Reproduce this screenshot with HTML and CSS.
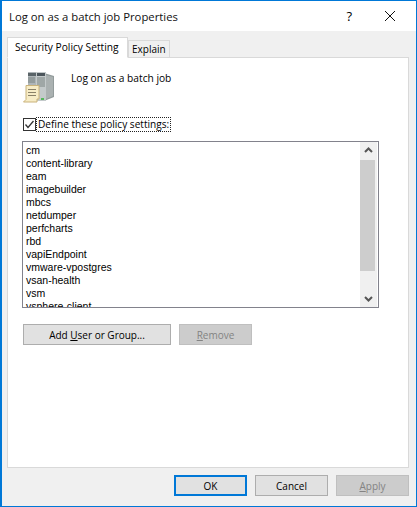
FILE: index.html
```html
<!DOCTYPE html>
<html lang="en">
<head>
<meta charset="utf-8">
<title>Log on as a batch job Properties</title>
<link rel="stylesheet" href="styles.css">
</head>
<body>
<div class="window">
  <header class="titlebar">
    <span class="title">Log on as a batch job Properties</span>
    <span class="help">?</span>
    <svg class="close" width="10" height="10" viewBox="0 0 10 10"><path d="M0 0L10 10M10 0L0 10" stroke="#111" stroke-width="1" fill="none"/></svg>
  </header>
  <main class="client">
    <div class="tabs">
      <div class="tab active">Security Policy Setting</div>
      <div class="tab">Explain</div>
    </div>
    <section class="panel">
      <div class="policy">
        <svg class="policy-icon" width="32" height="32" viewBox="0 0 32 32">
          <path d="M21 2L31 5V26L21 30Z" fill="#939c9c"/>
          <path d="M23 4L30 6V25L23 28Z" fill="#aab1b1"/>
          <rect x="5" y="1" width="10" height="20" fill="#aeb5b8"/>
          <rect x="13" y="1" width="10" height="29" fill="#c4cacb"/>
          <rect x="5" y="2" width="8" height="3" fill="#5a6468"/>
          <rect x="14" y="2" width="8" height="3" fill="#4c565c"/>
          <path d="M5 7H12M5 9H12M5 11H12M14 7H22M14 9H22M14 11H22M14 13H22M14 15H22" stroke="#7a8482" stroke-width="1"/>
          <rect x="18" y="27" width="3" height="2" fill="#55b85c"/>
          <path d="M3 14.500H16V28H14V31H.5L3 28.500Z" fill="#f7ecc6" stroke="#c9b27a" stroke-width="1"/>
          <path d="M5 18.500H13M5 21.500H13M5 24.500H13" stroke="#8a8168" stroke-width="1"/>
        </svg>
        <span class="policy-name">Log on as a batch job</span>
      </div>
      <label class="define">
        <svg class="checkbox" width="13" height="13" viewBox="0 0 13 13"><rect x=".5" y=".5" width="12" height="12" fill="#fff" stroke="#333"/><path d="M2.500 6.500L5 9.500L10.500 3" stroke="#333" stroke-width="1.300" fill="none"/></svg>
        <span class="define-text">Define these policy settings:</span>
      </label>
      <div class="listbox">
        <ul class="items">
          <li>cm</li>
          <li>content-library</li>
          <li>eam</li>
          <li>imagebuilder</li>
          <li>mbcs</li>
          <li>netdumper</li>
          <li>perfcharts</li>
          <li>rbd</li>
          <li>vapiEndpoint</li>
          <li>vmware-vpostgres</li>
          <li>vsan-health</li>
          <li>vsm</li>
          <li>vsphere-client</li>
        </ul>
        <div class="scrollbar">
          <svg class="arrow" width="17" height="17" viewBox="0 0 17 17"><path d="M5 10L8.500 6.500L12 10" stroke="#555" stroke-width="2" fill="none"/></svg>
          <div class="track"><div class="thumb"></div></div>
          <svg class="arrow" width="17" height="17" viewBox="0 0 17 17"><path d="M5 7L8.500 10.500L12 7" stroke="#555" stroke-width="2" fill="none"/></svg>
        </div>
      </div>
      <div class="list-actions">
        <button class="btn wide">Add <u>U</u>ser or Group...</button>
        <button class="btn disabled"><u>R</u>emove</button>
      </div>
    </section>
    <footer class="footer">
      <button class="btn default">OK</button>
      <button class="btn">Cancel</button>
      <button class="btn disabled"><u>A</u>pply</button>
    </footer>
  </main>
</div>
</body>
</html>
```
FILE: styles.css
```css
* { box-sizing: border-box; }
html, body { margin: 0; padding: 0; }
body { width: 417px; height: 507px; overflow: hidden; background: #f0f0f0; }
.window {
  width: 417px; height: 507px;
  border: 1px solid #0078d7; border-left-width: 2px;
  display: flex; flex-direction: column;
  font-family: "Liberation Sans", Arial, sans-serif; font-size: 10.5px; color: #000;
}
.titlebar {
  height: 30px; flex: none; background: #fff;
  display: flex; align-items: center; padding-left: 7px;
}
.title { font-family: "Open Sans", sans-serif; font-size: 11.300px; flex: 1; color: #111; }
.help { font-family: "Open Sans", sans-serif; font-size: 13px; margin-right: 33px; }
.close { margin-right: 21px; }
.client { flex: 1; display: flex; flex-direction: column; background: #f0f0f0; padding: 7px 7px 0 5px; }
.tabs { display: flex; align-items: flex-end; height: 20px; flex: none; position: relative; z-index: 1; margin-bottom: -1px; }
.tab {
  height: 18px; padding: 0 3px; line-height: 17px; white-space: nowrap;
  background: #f0f0f0; border: 1px solid #d9d9d9;
  font-family: "Open Sans", sans-serif; font-size: 10px;
}
.tab.active {
  height: 21px; width: 121px; padding: 0 7px; line-height: 18px;
  background: #fff; border-color: #d9d9d9; border-bottom-color: #fff;
  font-size: 10.200px;
}
.panel {
  height: 411px; flex: none; background: #fff; border: 1px solid #d9d9d9;
  padding: 0 0 0 14px;
}
.policy { display: flex; height: 46px; padding-top: 13px; margin-left: 1px; }
.policy-icon { flex: none; }
.policy-name { margin-left: 16px; font-family: "Open Sans", sans-serif; font-size: 10.200px; line-height: 14px; }
.define { display: flex; align-items: center; height: 16px; margin-top: 12px; margin-left: 1px; }
.checkbox { flex: none; margin-top: 1px; }
.define-text { margin-left: 1px; outline: 1px dotted #222; font-family: "Open Sans", sans-serif; font-size: 10.100px; line-height: 13px; padding: 0 1px; }
.listbox {
  width: 357px; height: 167px; margin-top: 9px; display: flex; justify-content: space-between;
  border: 1px solid #82828c; background: #fff; overflow: hidden;
}
.items { list-style: none; margin: 0; padding: 2px 0 0 3px; line-height: 13px; }
.items li { height: 13px; white-space: nowrap; }
.scrollbar { width: 17px; flex: none; margin-right: 1px; background: #f0f0f0; display: flex; flex-direction: column; }
.arrow { flex: none; }
.track { flex: 1; }
.thumb { height: 111px; width: 15px; background: #cdcdcd; margin-top: 1px; }
.list-actions { display: flex; gap: 8px; margin-top: 16px; margin-left: 1px; }
.btn {
  width: 73px; height: 21px; padding: 0;
  background: #e1e1e1; border: 1px solid #adadad; color: #000;
  font-family: "Open Sans", sans-serif; font-size: 10px;
}
.btn.wide { width: 148px; }
.btn.disabled { background: #cccccc; border-color: #bfbfbf; color: #838383; }
.btn.default { border: 2px solid #0078d7; }
.footer { display: flex; justify-content: flex-end; gap: 8px; margin-top: 7px; }
```
